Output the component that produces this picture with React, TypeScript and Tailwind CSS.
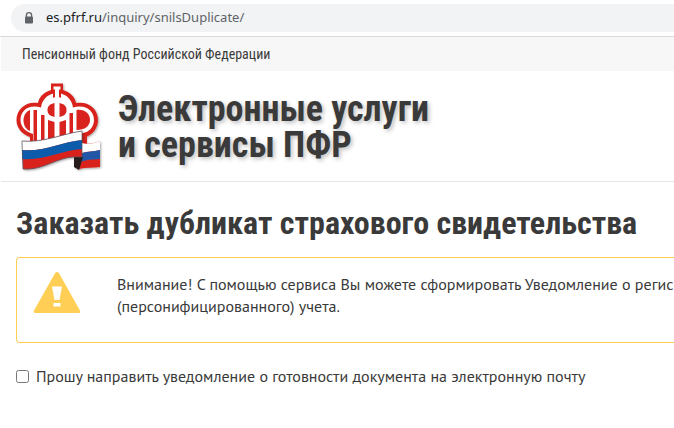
import React from "react";

function LockIcon() {
  return (
    <svg width="10" height="12" viewBox="0 0 10 12" aria-hidden="true">
      <path d="M2.4 5V3.3a2.6 2.6 0 0 1 5.2 0V5" fill="none" stroke="#5f6368" strokeWidth="1.3" />
      <rect x="1" y="4.5" width="8" height="7" rx="1" fill="#5f6368" />
    </svg>
  );
}

function Logo() {
  return (
    <svg className="shrink-0" width="90" height="92" viewBox="0 0 90 92" aria-hidden="true">
      <defs>
        <filter id="soft" x="-10%" y="-10%" width="125%" height="125%">
          <feDropShadow dx="1" dy="1" stdDeviation="1" floodColor="#000" floodOpacity="0.35" />
        </filter>
      </defs>
      <g filter="url(#soft)">
        <path
          d="M35 0.500H47V7C54 9 59 14 60 20C73 18 82 26 82 37C82 45 77 51 70 54V66H14V54C6 51 0.500 45 0.500 37C0.500 26 10 18 22 20C23 14 28 9 35 7Z"
          fill="#d9231f"
        />
      </g>
      <path
        d="M37.500 3.500H44.500V10.500C51 12 56 17 57 24.500C70 21 78 28 78 37C78 44 73 49 66 51V62H17V51C10 49 4.500 44 4.500 37C4.500 28 12 21 25 24.500C26 17 31 12 37.500 10.500Z"
        fill="#fff"
      />
      <g fill="#d9231f">
        <path d="M37 6.500H39V14L37 15ZM45 6.500H43V14L45 15Z" />
        <path d="M14 27V48C9.500 46 7.500 42 7.500 37.500C7.500 33 9.500 29 14 27Z" />
        <path d="M17.500 27H21V62H17.500ZM25 32H28.500V62H25Z" />
        <path d="M38.500 20V34C34 33 31.500 31 31.500 27C31.500 23 34 21 38.500 20Z" />
        <path d="M43.500 20V34C48 33 50.500 31 50.500 27C50.500 23 48 21 43.500 20Z" />
        <path d="M32 37L38.500 39V62H32ZM43.500 39L50 37V62H43.500Z" />
        <path d="M53.500 30H57V62H53.500Z" />
        <path d="M60.500 27C69 26 74 31 74 37C74 43 69 47 60.500 47Z" />
        <path d="M60.500 50.500C65 51 68 50 71 49V62H60.500Z" />
      </g>
      <g filter="url(#soft)">
        <path d="M66 60C73 62 79 60 84 58V84C77 85 70 84 63 86V74Z" fill="#d9231f" />
        <path d="M66 60C73 62 79 60 84 58V67C77 69 72 68 66 70Z" fill="#fff" />
        <path d="M66 70C72 68 77 69 84 67V76C77 77 71 76 65 79Z" fill="#2457a6" />
        <path d="M58 73L67 74L63 87L58 84Z" fill="#251c1d" />
        <path d="M6 58C27 60 46 51 66 48V74H58C42 74 26 88 7 86Z" fill="#d9231f" />
        <path d="M6 58C27 60 46 51 66 48V57C46 59 28 69 6 67Z" fill="#fff" />
        <path d="M6 67C28 69 46 59 66 57V66C46 67 28 78 6 76Z" fill="#0d5cab" />
        <path d="M6 58C27 60 46 51 66 48V74H58C42 74 26 88 7 86Z" fill="none" stroke="#55505a" strokeWidth="0.7" />
      </g>
    </svg>
  );
}

function WarningIcon() {
  return (
    <svg className="shrink-0" width="48" height="42" viewBox="0 0 48 42" aria-hidden="true">
      <path d="M22 1.200Q24 -1 26 1.200L47 38.500Q48 41 45.500 41H2.500Q0 41 1 38.500Z" fill="#ffcf55" />
      <path d="M19 14.500H29L26.500 28H21.500ZM20.500 31H27.500V34.500H20.500Z" fill="#fff" />
    </svg>
  );
}

export default function App() {
  return (
    <div className="min-h-screen overflow-hidden bg-white font-['PT_Sans','Noto_Sans',sans-serif] text-[#3a3a3a]">
      <div className="border-b border-[#d9dadf] py-1 pl-[11px]">
        <div className="flex h-7 items-center gap-3 rounded-l-full bg-[#f1f3f4] pl-[13px]">
          <LockIcon />
          <p className="font-['Noto_Sans',sans-serif] text-[13px] text-[#5f6368]">
            <span className="text-[#202124]">es.pfrf.ru</span>/inquiry/snilsDuplicate/
          </p>
        </div>
      </div>
      <div className="ml-px flex h-[34px] items-center bg-[#f7f7f7] pl-[21px] font-['Roboto_Condensed','Liberation_Sans_Narrow',sans-serif] text-sm">
        Пенсионный фонд Российской Федерации
      </div>
      <header className="ml-px flex h-[111px] items-start gap-3 border-b border-[#e5e5e5] pl-[15px] pt-3">
        <Logo />
        <p className="pt-2 font-['Roboto_Condensed','Liberation_Sans_Narrow',sans-serif] text-[36px] leading-9 font-bold [text-shadow:2px_2px_4px_rgba(0,0,0,0.25)]">
          Электронные услуги
          <br />
          и сервисы ПФР
        </p>
      </header>
      <main className="pl-4">
        <h1 className="pt-5 font-['Roboto_Condensed','Liberation_Sans_Narrow',sans-serif] text-[32px] leading-[42px] font-bold whitespace-nowrap">
          Заказать дубликат страхового свидетельства
        </h1>
        <section className="mt-[13px] flex h-[86px] items-start gap-9 rounded-l border border-r-0 border-[#ffcf55] pl-4 pt-[14px]">
          <WarningIcon />
          <p className="pt-px text-base leading-[22px] whitespace-nowrap">
            Внимание! С помощью сервиса Вы можете сформировать Уведомление о регис
            <br />
            (персонифицированного) учета.
          </p>
        </section>
        <label className="mt-[22px] flex items-center gap-[7px] text-base leading-[22px] whitespace-nowrap">
          <input type="checkbox" className="size-[13px]" />
          Прошу направить уведомление о готовности документа на электронную почту
        </label>
      </main>
    </div>
  );
}
